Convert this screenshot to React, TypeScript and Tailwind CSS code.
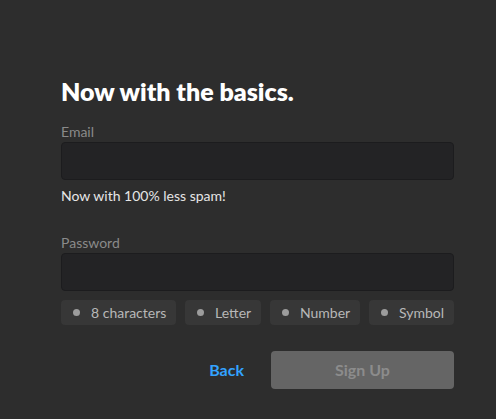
export default function App() {
  const rules = ['8 characters', 'Letter', 'Number', 'Symbol'];
  return (
    <div
      className="min-h-[419px] w-full bg-[#2d2d2d] pt-[76px] px-[61px]"
      style={{ fontFamily: 'Lato, "Noto Sans", sans-serif' }}
    >
      <div className="w-[393px] flex flex-col">
        {/* heading */}
        <h1 className="text-[25px] leading-[30px] font-extrabold text-white">Now with the basics.</h1>

        {/* email */}
        <label className="mt-[17px] text-[14px] leading-[18px] text-[#8a8a8a]">Email</label>
        <div className="mt-[1px] h-[38px] rounded-[4px] bg-[#232325] border border-[#1c1c1e]" />
        <p className="mt-[7px] text-[14px] leading-[18px] text-[#e6e6e6]">Now with 100% less spam!</p>

        {/* password */}
        <label className="mt-[29px] text-[14px] leading-[18px] text-[#8a8a8a]">Password</label>
        <div className="mt-[1px] h-[38px] rounded-[4px] bg-[#232325] border border-[#1c1c1e]" />
        <div className="mt-[9px] flex justify-between">
          {rules.map((r) => (
            <div key={r} className="h-[25px] flex items-center gap-[11px] pl-[12px] pr-[10px] rounded-[4px] bg-[#373737]">
              <span className="w-[7px] h-[7px] rounded-full bg-[#9c9c9c]" />
              <span className="text-[14px] text-[#b8b8b8]">{r}</span>
            </div>
          ))}
        </div>

        {/* actions */}
        <div className="mt-[26px] flex items-center justify-end">
          <button className="text-[16px] font-bold text-[#33a3ff] mr-[27px]">Back</button>
          <button className="w-[183px] h-[38px] rounded-[4px] bg-[#656565] text-[16px] font-bold text-[#8c8c8c]">Sign Up</button>
        </div>
      </div>
    </div>
  );
}
